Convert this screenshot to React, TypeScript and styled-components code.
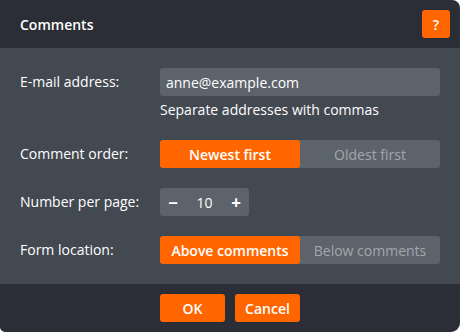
import React, { useState } from "react";
import styled, { createGlobalStyle } from "styled-components";

const Global = createGlobalStyle`
  html, body { margin: 0; padding: 0; background: #ffffff; }
  body { font-family: "Open Sans", "Noto Sans", sans-serif; font-size: 14px; }
  * { box-sizing: border-box; }
`;

const ORANGE = "#ff6600";

const Dialog = styled.div`
  width: 460px;
  height: 332px;
  display: flex;
  flex-direction: column;
  border-radius: 0 8px 9px 5px;
  overflow: hidden;
  color: #ffffff;
`;

const Header = styled.div`
  height: 48px;
  background: #2b2e36;
  display: flex;
  align-items: center;
  justify-content: space-between;
  padding: 0 10px 0 20px;
`;

const Title = styled.h1`
  margin: 0;
  font-size: 14px;
  font-weight: 600;
`;

const OrangeButton = styled.button<{ $w?: number }>`
  height: 28px;
  width: ${(p) => p.$w ?? 28}px;
  background: ${ORANGE};
  color: #fff;
  border: none;
  border-radius: 3px;
  font-family: inherit;
  font-size: 14px;
  font-weight: 600;
  padding: 0;
  cursor: pointer;
`;

const Body = styled.div`
  flex: 1;
  background: #434951;
  padding: 20px;
  display: grid;
  grid-template-columns: 140px 280px;
  row-gap: 20px;
  align-content: start;
`;

const Label = styled.div`
  height: 28px;
  line-height: 28px;
`;

const Field = styled.div`
  display: flex;
  flex-direction: column;
`;

const Input = styled.input`
  height: 28px;
  width: 280px;
  background: #5d636b;
  border: none;
  border-radius: 3px;
  color: #fff;
  font-family: inherit;
  font-size: 14px;
  padding: 0 6px;
  outline: none;
`;

const Hint = styled.div`
  margin-top: 4px;
  line-height: 20px;
`;

const Segmented = styled.div`
  display: flex;
  height: 28px;
  width: 280px;
  background: #5d636b;
  border-radius: 3px;
`;

const Segment = styled.button<{ $active: boolean }>`
  flex: 1;
  border: none;
  border-radius: 3px;
  background: ${(p) => (p.$active ? ORANGE : "transparent")};
  color: ${(p) => (p.$active ? "#ffffff" : "#a3a7ad")};
  font-family: inherit;
  font-size: 14px;
  font-weight: ${(p) => (p.$active ? 600 : 400)};
  padding: 0;
  cursor: pointer;
`;

const Stepper = styled.div`
  display: flex;
  align-items: center;
  height: 28px;
  width: 89px;
  background: #5d636b;
  border-radius: 3px;
`;

const StepBtn = styled.button`
  width: 26px;
  height: 28px;
  border: none;
  background: transparent;
  color: #fff;
  font-family: inherit;
  font-size: 17px;
  font-weight: 700;
  padding: 0;
  cursor: pointer;
`;

const StepValue = styled.span`
  flex: 1;
  text-align: center;
`;

const Footer = styled.div`
  height: 48px;
  background: #2b2e36;
  display: flex;
  align-items: center;
  gap: 10px;
  padding-left: 160px;
`;

export default function App() {
  const [order, setOrder] = useState(0);
  const [loc, setLoc] = useState(0);
  const [num, setNum] = useState(10);
  return (
    <>
      <Global />
      <Dialog>
        <Header>
          <Title>Comments</Title>
          <OrangeButton>?</OrangeButton>
        </Header>
        <Body>
          <Label>E-mail address:</Label>
          <Field>
            <Input defaultValue="anne@example.com" />
            <Hint>Separate addresses with commas</Hint>
          </Field>
          <Label>Comment order:</Label>
          <Segmented>
            <Segment $active={order === 0} onClick={() => setOrder(0)}>Newest first</Segment>
            <Segment $active={order === 1} onClick={() => setOrder(1)}>Oldest first</Segment>
          </Segmented>
          <Label>Number per page:</Label>
          <Stepper>
            <StepBtn onClick={() => setNum(num - 1)}>−</StepBtn>
            <StepValue>{num}</StepValue>
            <StepBtn onClick={() => setNum(num + 1)}>+</StepBtn>
          </Stepper>
          <Label>Form location:</Label>
          <Segmented>
            <Segment $active={loc === 0} onClick={() => setLoc(0)}>Above comments</Segment>
            <Segment $active={loc === 1} onClick={() => setLoc(1)}>Below comments</Segment>
          </Segmented>
        </Body>
        <Footer>
          <OrangeButton $w={65}>OK</OrangeButton>
          <OrangeButton $w={65}>Cancel</OrangeButton>
        </Footer>
      </Dialog>
    </>
  );
}
